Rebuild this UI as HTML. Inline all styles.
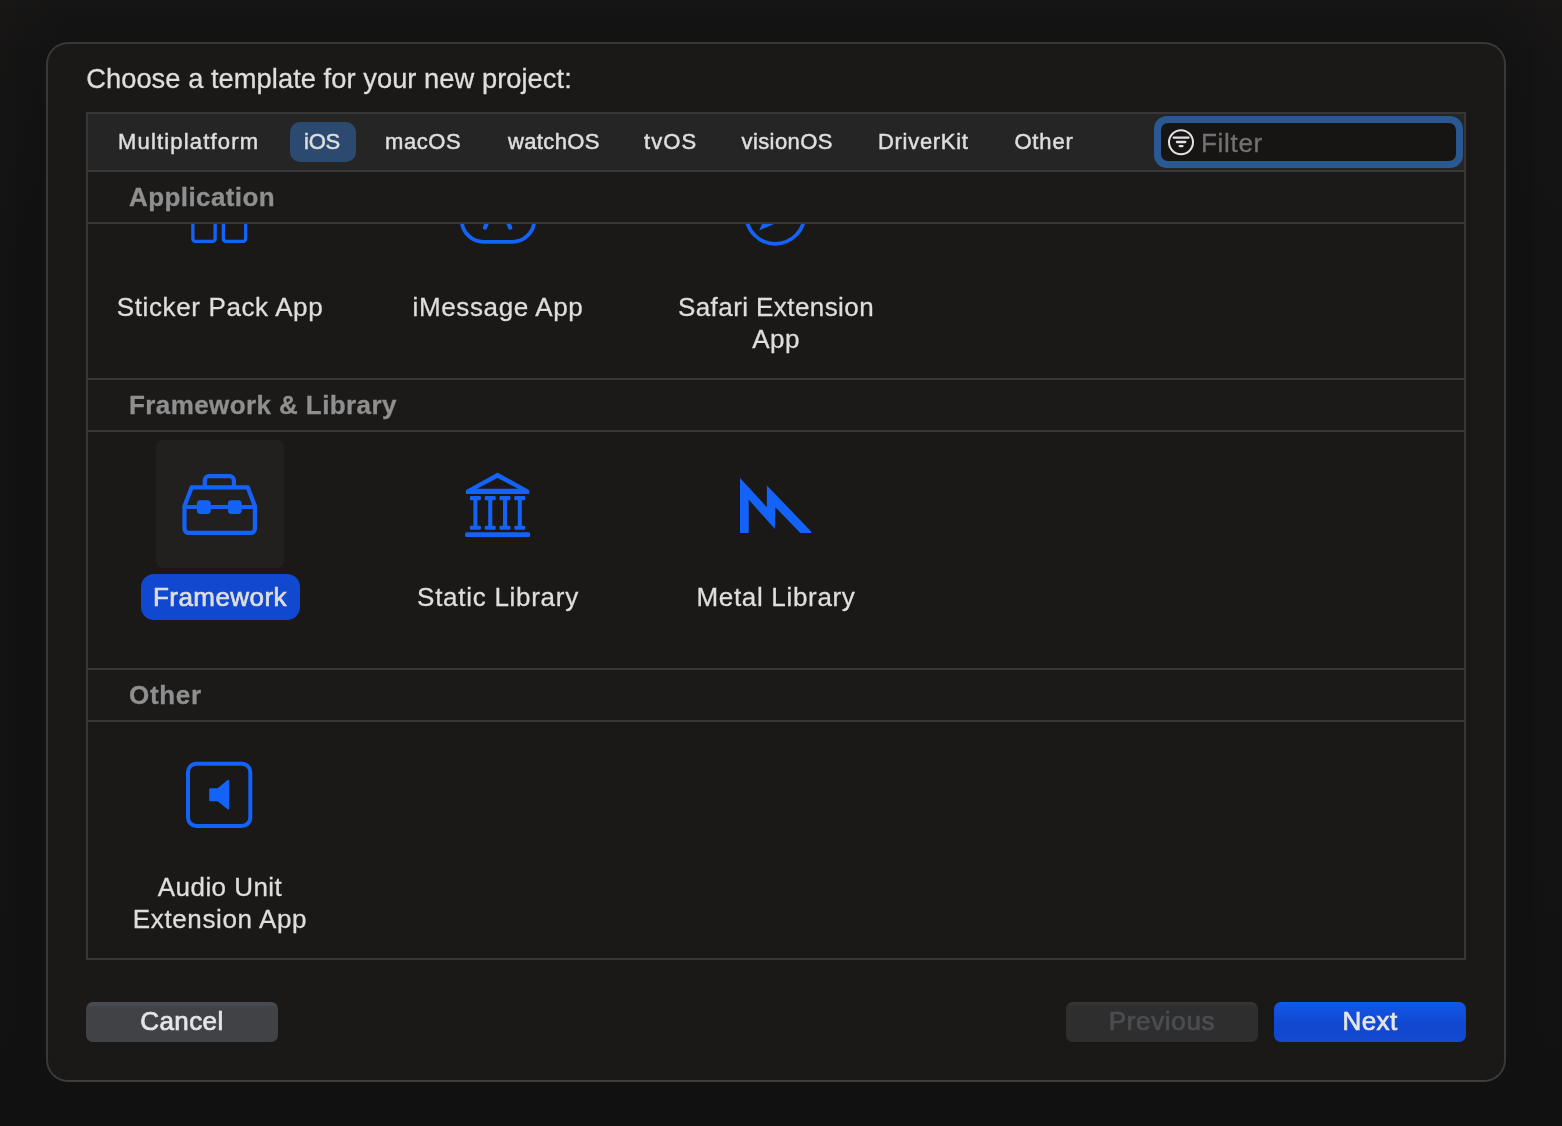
<!DOCTYPE html>
<html lang="en">
<head>
<meta charset="utf-8">
<title>Choose a template for your new project</title>
<style>
*{box-sizing:border-box;margin:0;padding:0}
html,body{width:1562px;height:1126px;overflow:hidden;background:#111111}
body{position:relative;font-family:"Liberation Sans",sans-serif;color:#dfdfdf;-webkit-text-stroke:.3px}
.abs{position:absolute}
#root{left:0;top:0;width:1562px;height:1126px;will-change:transform}
#bg{left:0;top:0;width:1562px;height:1126px;background:linear-gradient(to top,#111111 0,#111111 20px,rgba(17,17,17,0) 260px),radial-gradient(ellipse 70px 260px at 0 0,rgba(27,25,24,.3) 0,rgba(27,25,24,.2) 60%,rgba(27,25,24,0) 100%),radial-gradient(ellipse 80px 260px at 1562px 0,rgba(27,25,24,.3) 0,rgba(27,25,24,.2) 60%,rgba(27,25,24,0) 100%),linear-gradient(to bottom,rgba(27,25,24,.5) 0,rgba(27,25,24,.28) 16px,rgba(27,25,24,.2) 40px,rgba(27,25,24,0) 52px),linear-gradient(to right,rgba(27,25,24,.25) 0,rgba(27,25,24,.2) 12px,rgba(27,25,24,0) 20px),linear-gradient(to left,rgba(27,25,24,.25) 0,rgba(27,25,24,.2) 24px,rgba(27,25,24,0) 32px),#111111}
#dialog{left:46px;top:42px;width:1460px;height:1040px;border:2px solid #383838;border-bottom-color:#3d3d3d;border-radius:22px;background:#1b1918}
#title{left:86.2px;top:63px;font-size:27.3px;line-height:32px;letter-spacing:.04px;white-space:nowrap;color:#dedede}
#panel{left:86px;top:112px;width:1380px;height:848px;border:2px solid #373737;background:#1b1918;overflow:hidden}
/* coordinates inside #panel are page coords minus (88,114) */
#tabbar{left:0;top:0;width:1376px;height:56px;background:#252525}
.hline{left:0;width:1376px;height:2px;background:#373737}
.tab{top:12px;height:32px;line-height:32px;font-size:22px;white-space:nowrap;color:#dedede;-webkit-text-stroke:.5px}
#ios-pill{left:202px;top:8px;width:66px;height:40px;border-radius:10px;background:#2c4a70}
#filter{left:1066px;top:1.5px;width:308.5px;height:52.5px;border-radius:13px;background:#2a5890}
#filter-in{left:7px;top:7px;width:294.5px;height:38.5px;border-radius:7px;background:#161514}
#filter-text{left:47px;top:11px;font-size:26px;line-height:32px;color:#727274;letter-spacing:.7px}
.sechead{left:0;width:1376px;height:50px;background:#1b1a19}
.sechead span{position:absolute;left:41px;top:9px;font-size:26px;line-height:32px;font-weight:700;color:#8f8f8f;white-space:nowrap}
.label{width:278px;text-align:center;font-size:26px;line-height:32px;color:#dedede;white-space:nowrap}
.tile{width:128px;height:128px;border-radius:8px}
.btn{top:1002px;height:40px;border-radius:7px;text-align:center;font-size:26px;line-height:38px;white-space:nowrap;-webkit-text-stroke:.7px}
</style>
</head>
<body>
<div id="bg" class="abs"></div>
<div id="root" class="abs">
<div id="dialog" class="abs"></div>
<div id="title" class="abs">Choose a template for your new project:</div>

<div id="panel" class="abs">

  <div id="tabbar" class="abs"></div>
  <div id="ios-pill" class="abs"></div>
  <div class="abs tab" style="left:30px;letter-spacing:1.18px">Multiplatform</div>
  <div class="abs tab" style="left:216px;letter-spacing:-.2px">iOS</div>
  <div class="abs tab" style="left:297px;letter-spacing:.6px">macOS</div>
  <div class="abs tab" style="left:420px;letter-spacing:.35px">watchOS</div>
  <div class="abs tab" style="left:556px;letter-spacing:1.1px">tvOS</div>
  <div class="abs tab" style="left:653.5px;letter-spacing:.4px">visionOS</div>
  <div class="abs tab" style="left:790px;letter-spacing:.7px">DriverKit</div>
  <div class="abs tab" style="left:926.4px;letter-spacing:.85px">Other</div>
  <div id="filter" class="abs"><div id="filter-in" class="abs"></div><div id="filter-text" class="abs">Filter</div></div>
  <div class="abs hline" style="top:56px"></div>

  <div class="abs sechead" style="top:58px"><span style="letter-spacing:.41px">Application</span></div>
  <div class="abs hline" style="top:108px"></div>
  <div class="abs label" style="left:-7px;top:177px;letter-spacing:.63px">Sticker Pack App</div>
  <div class="abs label" style="left:271px;top:177px;letter-spacing:.63px">iMessage App</div>
  <div class="abs label" style="left:549px;top:177px;letter-spacing:.42px">Safari Extension<br>App</div>
  <div class="abs hline" style="top:264px"></div>

  <div class="abs sechead" style="top:266px"><span style="letter-spacing:.41px">Framework &amp; Library</span></div>
  <div class="abs hline" style="top:316px"></div>
  <div class="abs tile" style="left:68px;top:326px;background:#21201f"></div>
  <div class="abs" style="left:53px;top:460px;width:159px;height:46px;border-radius:13px;background:#1048d0"></div>
  <div class="abs label" style="left:-7px;top:467px;letter-spacing:.45px;color:#dedede;-webkit-text-stroke:.7px">Framework</div>
  <div class="abs label" style="left:271px;top:467px;letter-spacing:.72px">Static Library</div>
  <div class="abs label" style="left:549px;top:467px;letter-spacing:.68px">Metal Library</div>
  <div class="abs hline" style="top:554px"></div>

  <div class="abs sechead" style="top:556px"><span style="letter-spacing:.7px">Other</span></div>
  <div class="abs hline" style="top:606px"></div>
  <div class="abs label" style="left:-7px;top:757px;letter-spacing:.45px">Audio Unit<br><span style="letter-spacing:.62px">Extension App</span></div>

  <svg class="abs" style="left:0;top:0" width="1376" height="844" viewBox="88 114 1376 844" fill="none" stroke="#1463f8" stroke-width="3.4" stroke-linejoin="round" stroke-linecap="round">
    <defs><clipPath id="appclip"><rect x="88" y="224" width="1376" height="154"/></clipPath></defs>

    <g clip-path="url(#appclip)" stroke-width="3.3">
      <rect x="192.85" y="188.55" width="22.3" height="22.3" rx="2.6"/>
      <rect x="223.35" y="188.55" width="22.3" height="22.3" rx="2.6"/>
      <rect x="192.85" y="219.05" width="22.3" height="22.3" rx="2.6"/>
      <rect x="223.35" y="219.05" width="22.3" height="22.3" rx="2.6"/>
      <rect x="461.7" y="185.85" width="72.6" height="56.05" rx="22.1" stroke-width="3.8"/>
      <path stroke-width="4.2" d="M497.6 197 L485 227.6 M497.6 197 L510.2 227.6 M488 214 H507"/>
      <circle cx="775.3" cy="214.7" r="29.15" stroke-width="3.7"/>
      <path d="M759.2 230.4 L769.1 208.5 L781.5 220.9 Z" fill="#1463f8" stroke="none"/>
      <path d="M791.4 199 L769.1 208.5 L781.5 220.9 Z" stroke-width="2"/>
    </g>
    <!-- toolbox -->
    <g stroke-width="4.2">
      <path d="M204.8 487.3 V480.4 a4.2 4.2 0 0 1 4.2 -4.2 H229.7 a4.2 4.2 0 0 1 4.2 4.2 V487.3"/>
      <path d="M184.5 506 L191.7 487.3 H247.7 L254.9 506 V528.7 a4.2 4.2 0 0 1 -4.2 4.2 H188.7 a4.2 4.2 0 0 1 -4.2 -4.2 Z"/>
      <path d="M184.5 507 H254.9" stroke-width="4" stroke-linecap="butt"/>
      <rect x="197" y="500.2" width="13.8" height="13.8" rx="3.4" fill="#1463f8" stroke="none"/>
      <rect x="227.9" y="500.2" width="13.8" height="13.8" rx="3.4" fill="#1463f8" stroke="none"/>
    </g>
    <!-- static library -->
    <g fill="#1463f8" stroke="#1463f8" stroke-width="1.4">
      <path d="M497.6 473.4 L528.6 490.6 V493.3 H466.6 V490.6 Z"/>
      <path d="M497.6 478 L518.4 488.8 H476.8 Z" fill="#1b1918" stroke="none"/>
      <rect x="470.6" y="496.6" width="9.6" height="3" rx=".6"/>
      <rect x="485.4" y="496.6" width="9.6" height="3" rx=".6"/>
      <rect x="500.2" y="496.6" width="9.6" height="3" rx=".6"/>
      <rect x="515.0" y="496.6" width="9.6" height="3" rx=".6"/>
      <rect x="470.6" y="526.4" width="9.6" height="2.6" rx=".6"/>
      <rect x="485.4" y="526.4" width="9.6" height="2.6" rx=".6"/>
      <rect x="500.2" y="526.4" width="9.6" height="2.6" rx=".6"/>
      <rect x="515.0" y="526.4" width="9.6" height="2.6" rx=".6"/>
      <rect x="474.1" y="498" width="2.6" height="30" stroke-width="1.4"/>
      <rect x="488.9" y="498" width="2.6" height="30"/>
      <rect x="503.7" y="498" width="2.6" height="30"/>
      <rect x="518.5" y="498" width="2.6" height="30"/>
      <rect x="465.8" y="533" width="63.6" height="3.4" rx="1"/>
    </g>
    <!-- metal -->
    <path fill="#1463f8" stroke="none" d="M740 478 L766.9 507.2 V485.4 L811.1 531.5 V532.9 H800.3 L775.4 507.2 L774.9 529.1 L748.7 499.6 V532.9 H740 Z"/>
    <!-- audio unit -->
    <rect x="188" y="763.7" width="62.3" height="62.3" rx="8.5" stroke-width="4"/>
    <path fill="#1463f8" stroke="#1463f8" stroke-width="2" d="M210.2 789.2 H218 L228.2 780.8 V808.6 L218 800.2 H210.2 Z"/>
    <!-- filter icon -->
    <g stroke="#e2e2e2" stroke-width="2">
      <circle cx="1181" cy="142.2" r="12"/>
      <path stroke-width="2.3" d="M1173.7 137.7 H1188.5 M1176.9 142 H1185.3 M1179.7 146.1 H1182.5"/>
    </g>

  </svg>

</div>


<div class="abs btn" style="left:86px;width:192px;background:linear-gradient(#494c51 0,#484b50 3px,#404246 5px,#404246);color:#e6e6e6;letter-spacing:.4px">Cancel</div>
<div class="abs btn" style="left:1066px;width:192px;background:linear-gradient(#363636 0,#353535 2px,#2e2e2e 4px,#2e2e2e);color:#4b4d52;letter-spacing:.65px">Previous</div>
<div class="abs btn" style="left:1274px;width:192px;background:linear-gradient(#1260f6 0,#1156e6 1.5px,#1150dc 30%,#1049d2 50%,#1048d0 58%,#1048d0 82%,#164bcc 100%);color:#e6e6e6;letter-spacing:.4px">Next</div>

</div>
</body>
</html>
